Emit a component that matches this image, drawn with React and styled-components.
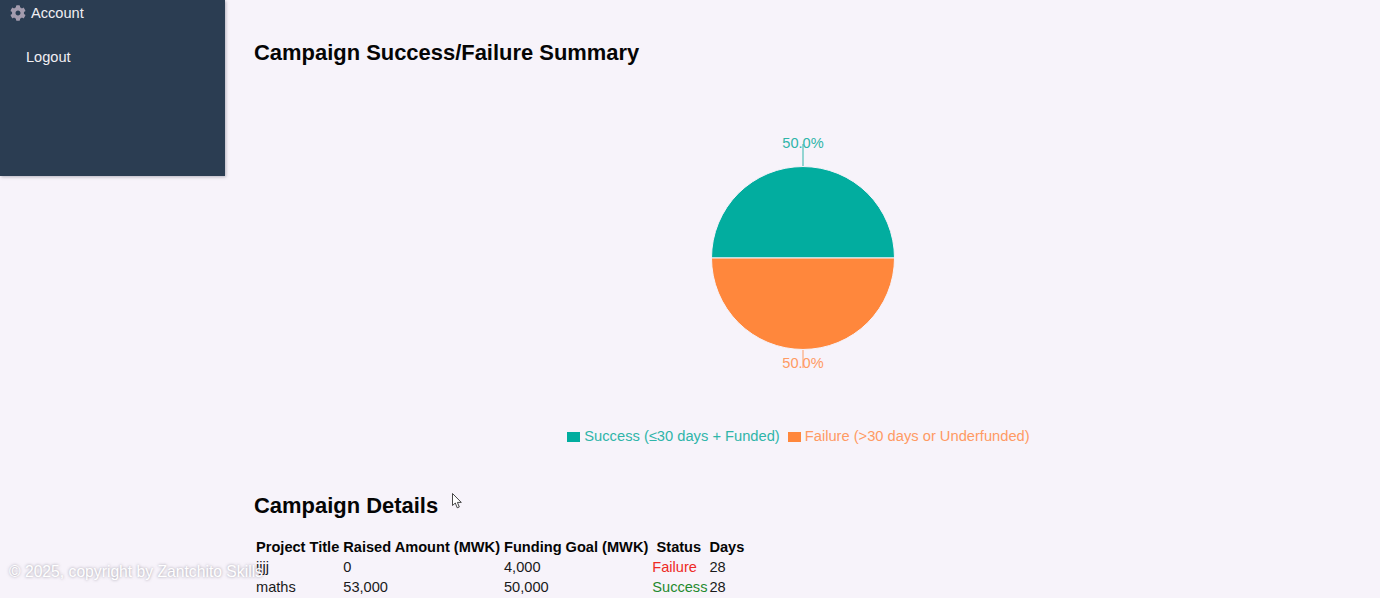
import React from 'react';
import styled, { createGlobalStyle } from 'styled-components';
import { FaCog } from 'react-icons/fa';

const GlobalStyle = createGlobalStyle`
    html, body {
        margin: 0;
        padding: 0;
        height: 598px;
        overflow: hidden;
        background: #f7f3fa;
        font-family: "Liberation Sans", Arial, sans-serif;
    }
`;

const Page = styled.div`
    display: flex;
    align-items: flex-start;
    height: 598px;
    overflow: hidden;
    position: relative;
`;

const Sidebar = styled.nav`
    width: 225px;
    height: 176px;
    flex-shrink: 0;
    background: #2b3d52;
    box-shadow: 1px 1px 3px rgba(60, 60, 80, 0.35);
    display: flex;
    flex-direction: column;
    padding: 4px 0 0 10px;
    box-sizing: border-box;
`;

const NavItem = styled.a`
    display: flex;
    align-items: center;
    gap: 5px;
    height: 18px;
    margin-left: ${({ $indent }) => ($indent ? '16px' : '0')};
    margin-bottom: 26px;
    font-size: 14.6px;
    color: #f1eff3;
    svg {
        color: #a49cae;
        font-size: 16px;
    }
`;

const Main = styled.main`
    flex: 1;
    min-width: 0;
    padding: 40px 28px 0 29px;
`;

const Heading = styled.h2`
    margin: 0;
    font-size: 21.95px;
    line-height: 25px;
    font-weight: 700;
    color: #050505;
`;

const ChartWrap = styled.div`
    display: flex;
    justify-content: center;
    margin-top: 63px;
    height: 245px;
`;

const Legend = styled.ul`
    list-style: none;
    margin: 54px 0 0;
    padding: 0 9px 0 0;
    display: flex;
    justify-content: center;
    gap: 8px;
    height: 18px;
    font-size: 14.7px;
    line-height: 18px;
`;

const LegendItem = styled.li`
    display: flex;
    align-items: center;
    gap: 4px;
    color: ${({ $color }) => $color};
`;

const Swatch = styled.span`
    width: 13px;
    height: 10px;
    margin-top: 1px;
    background: ${({ $color }) => $color};
`;

const DetailsHeading = styled(Heading)`
    margin-top: 48px;
`;

const Table = styled.table`
    margin-top: 18px;
    border-collapse: separate;
    border-spacing: 2px;
    font-size: 14.6px;
    line-height: 18px;
    color: #1a1a1a;
`;

const Th = styled.th`
    padding: 0 2px 0 0;
    color: #050505;
    white-space: nowrap;
`;

const Td = styled.td`
    padding: 0;
    white-space: nowrap;
    color: ${({ $status }) => ($status === 'Success' ? '#1f8a2e' : $status === 'Failure' ? '#ee2a24' : '#1a1a1a')};
`;

const Copyright = styled.div`
    position: absolute;
    left: 9px;
    top: 563px;
    font-size: 15.7px;
    line-height: 18px;
    white-space: nowrap;
    color: #fff;
    text-shadow: 0 0 3px rgba(130, 125, 140, 0.8);
`;

const Cursor = styled.svg`
    position: absolute;
    left: 452px;
    top: 493px;
`;

const rows = [
    { title: 'ijjj', raised: '0', goal: '4,000', status: 'Failure', days: 28 },
    { title: 'maths', raised: '53,000', goal: '50,000', status: 'Success', days: 28 },
];

function PieChart() {
    return (
        <svg width="240" height="245" viewBox="0 0 240 245">
            <path d="M120 38V16" stroke="#2fb5a9" fill="none" />
            <path d="M120 222V240" stroke="#ff9a63" fill="none" />
            <path d="M28.5 130A91.5 91.5 0 0 1 211.5 130Z" fill="#02ad9f" stroke="#f7f3fa" />
            <path d="M28.5 130A91.5 91.5 0 0 0 211.5 130Z" fill="#ff873c" stroke="#f7f3fa" />
            <text x="120" y="20" textAnchor="middle" fontSize="14.6" fill="#2fb5a9">50.0%</text>
            <text x="120" y="240" textAnchor="middle" fontSize="14.6" fill="#ff9a63">50.0%</text>
        </svg>
    );
}

export default function App() {
    return (
        <Page>
            <GlobalStyle />
            <Sidebar>
                <NavItem><FaCog />Account</NavItem>
                <NavItem $indent>Logout</NavItem>
            </Sidebar>
            <Main>
                <Heading>Campaign Success/Failure Summary</Heading>
                <ChartWrap><PieChart /></ChartWrap>
                <Legend>
                    <LegendItem $color="#2fb5a9"><Swatch $color="#02ad9f" />Success (≤30 days + Funded)</LegendItem>
                    <LegendItem $color="#ff9a63"><Swatch $color="#ff873c" />Failure (&gt;30 days or Underfunded)</LegendItem>
                </Legend>
                <DetailsHeading>Campaign Details</DetailsHeading>
                <Table>
                    <thead>
                        <tr>
                            <Th>Project Title</Th>
                            <Th>Raised Amount (MWK)</Th>
                            <Th>Funding Goal (MWK)</Th>
                            <Th>Status</Th>
                            <Th>Days</Th>
                        </tr>
                    </thead>
                    <tbody>
                        {rows.map((r) => (
                            <tr key={r.title}>
                                <Td>{r.title}</Td>
                                <Td>{r.raised}</Td>
                                <Td>{r.goal}</Td>
                                <Td $status={r.status}>{r.status}</Td>
                                <Td>{r.days}</Td>
                            </tr>
                        ))}
                    </tbody>
                </Table>
            </Main>
            <Copyright>© 2025, copyright by Zantchito Skills</Copyright>
            <Cursor width="11" height="16" viewBox="0 0 11 16">
                <path d="M.5.5V12.5L3.3 10 5.2 14.8 7.3 14 5.4 9.4H9.3Z" fill="#fff" stroke="#333" strokeWidth="0.9" />
            </Cursor>
        </Page>
    );
}
